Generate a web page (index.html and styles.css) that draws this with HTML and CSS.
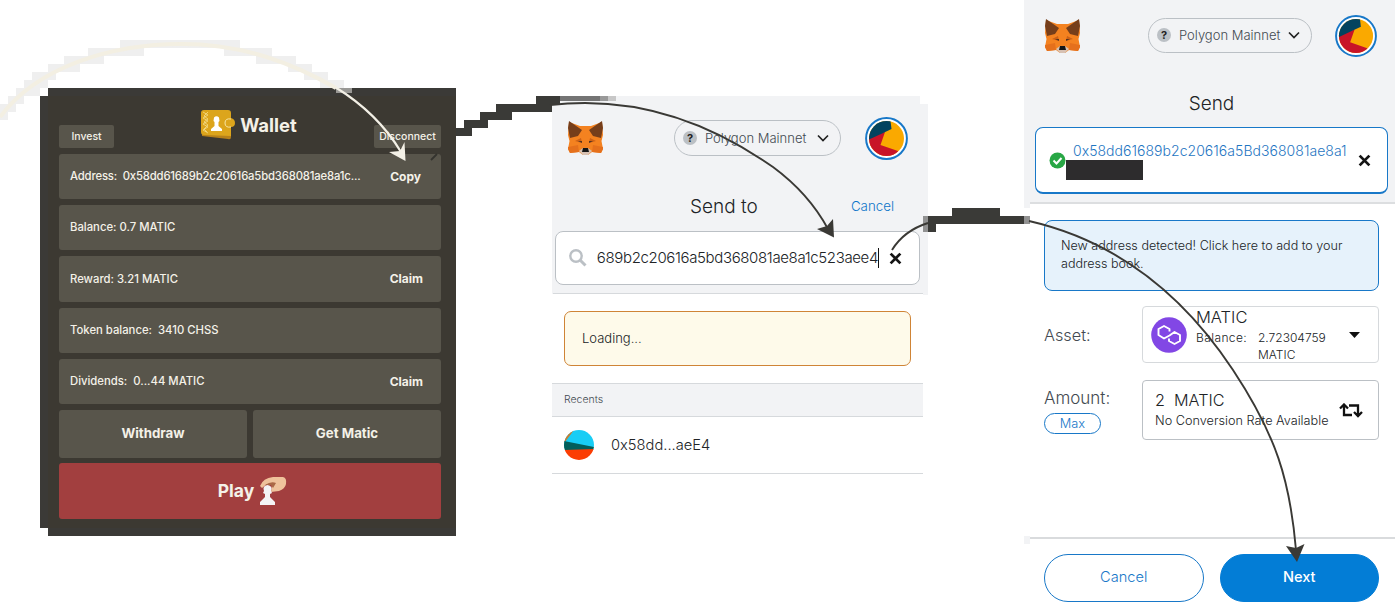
FILE: index.html
```
<!DOCTYPE html>
<html lang="en">
<head>
<meta charset="utf-8">
<title>Wallet transfer guide</title>
<link rel="stylesheet" href="styles.css">
</head>
<body>
<svg class="defs" width="0" height="0">
  <symbol id="fox" viewBox="0 0 35 34">
    <path fill="#f48220" d="M1 1 12 5H23L34 1 35 14 33.500 20 35 28 33 32 24 31 20 34H15L11 31 2 32 0 28 1.500 20 0 14Z"/>
    <path fill="#e5701c" d="M0 26 10 24 11 31 2 32 0 28ZM35 26 25 24 24 31 33 32 35 28Z"/>
    <path fill="#763e1a" d="M1 0 14 9 10 15 2 17 1 12 0 7ZM34 0 21 9 25 15 33 17 34 12 35 7Z"/>
    <path fill="#cd6116" d="M7 20 13 17 14 22ZM28 20 22 17 21 22Z"/>
    <path fill="#573420" d="M10 20 14 20 14 22ZM25 20 21 20 21 22Z"/>
    <path fill="#d7c1b3" d="M11 30 15 27H20L24 30 20 34H15Z"/>
    <path fill="#161616" d="M15 27H20L21 31H14Z"/>
  </symbol>
  <symbol id="avatar" viewBox="0 0 43 43">
    <clipPath id="disc"><circle cx="21.500" cy="21.500" r="17.500"/></clipPath>
    <circle cx="21.500" cy="21.500" r="20.400" fill="#fff" stroke="#1878c8" stroke-width="2"/>
    <g clip-path="url(#disc)"><path fill="#faa900" d="M0 0H43V43H0Z"/><path fill="#c81428" d="M0 20 20 15 15.500 28 33 34V43H0Z"/><path fill="#03435f" d="M0 0H25L26.500 12 16 17 3 23H0Z"/></g>
  </symbol>
  <symbol id="cross" viewBox="0 0 12 12"><path d="M1.500 1.500 10.500 10.500M10.500 1.500 1.500 10.500" stroke="#151515" stroke-width="2.600"/></symbol>
</svg>
<main class="stage">
  <section class="wallet">
    <header class="wallet-head">
      <span class="tag">Invest</span>
      <h1 class="brand">
        <svg width="36" height="32" viewBox="0 0 36 32"><path fill="#b7811a" d="M2 24H31V28Q31 31 28 30L2 27Z"/><path fill="#dca51c" d="M4 1H28Q31 1 31 4V9Q35 10 35 14 35 18 31 18V27L4 26Q1 26 1 23V4Q1 1 4 1Z"/><path d="M3 3 8 6 3 9 8 12 3 15 8 18 3 21 8 24M8 3 4 7 8 10 4 13 8 16 4 20 7 23" fill="none" stroke="#f4dd8b" stroke-width="0.800"/><path d="M31 10Q25 9 25 14T31 18" fill="none" stroke="#f6e5a3"/><path fill="#fff" d="M11 22V20L14.500 17V13L13.500 12 14 8.500Q16.500 6 19 8.500L19.500 12 18.500 13V17L22 20V22Z"/></svg>
        <span>Wallet</span>
      </h1>
      <span class="tag tag-wide">Disconnect</span>
    </header>
    <div class="rows">
      <div class="row"><span class="addr">Address:&nbsp; 0x58dd61689b2c20616a5bd368081ae8a1c...</span><b class="copy">Copy</b></div>
      <div class="row"><span>Balance: 0.7 MATIC</span></div>
      <div class="row"><span>Reward: 3.21 MATIC</span><b>Claim</b></div>
      <div class="row"><span>Token balance:&nbsp; 3410 CHSS</span></div>
      <div class="row"><span>Dividends:&nbsp; 0...44 MATIC</span><b>Claim</b></div>
    </div>
    <div class="pair"><b>Withdraw</b><b>Get Matic</b></div>
    <div class="play"><b>Play</b>
      <svg width="28" height="30" viewBox="0 0 28 30"><path fill="#efc29b" d="M1 10Q4 2 14 1L24 1Q28 2 27 8 26 13 20 15L12 16 13 9 8 8 3 12Z"/><path fill="#aa6845" d="M6 9Q12 5 17 7L14 12 12 9Z"/><path fill="#f4f4f5" d="M1 29V26L6 21V18L4 17 5 15Q3 10 8.500 9 14 10 12 15L13 17 11 18V21L16 26V29Z"/></svg>
    </div>
  </section>

  <section class="phone lookup">
    <div class="lookup-head">
      <div class="topbar">
        <svg class="fox" width="35" height="34"><use href="#fox"/></svg>
        <div class="network"><i>?</i><span>Polygon Mainnet</span><svg width="12" height="8" viewBox="0 0 12 8"><path d="M1 1.500 6 6.500 11 1.500" fill="none" stroke="#222" stroke-width="1.700"/></svg></div>
        <svg class="avatar" width="43" height="43"><use href="#avatar"/></svg>
      </div>
      <div class="titlebar"><h2>Send to</h2><a>Cancel</a></div>
      <div class="search">
        <svg width="18" height="18" viewBox="0 0 18 18"><circle cx="7" cy="7" r="5.700" fill="none" stroke="#bbc0c5" stroke-width="2.400"/><path d="M11 11 16.500 16.500" stroke="#bbc0c5" stroke-width="3"/></svg>
        <div class="query"><span>689b2c20616a5bd368081ae8a1c523aee4</span></div>
        <svg class="close" width="13" height="13"><use href="#cross"/></svg>
      </div>
    </div>
    <div class="loading">Loading...</div>
    <div class="recents">Recents</div>
    <div class="recent">
      <svg width="30" height="30" viewBox="0 0 30 30"><clipPath id="dot"><circle cx="15" cy="15" r="15"/></clipPath><g clip-path="url(#dot)"><path fill="#18cdf5" d="M0 0H30V18H0Z"/><path fill="#c77c31" d="M0 0H10L1 12H0Z"/><path fill="#025e5a" d="M0 11 30 17V20H0Z"/><path fill="#fb3d03" d="M0 20 30 19V30H0Z"/></g></svg>
      <span>0x58dd...aeE4</span>
    </div>
  </section>

  <section class="phone send">
    <div class="send-head">
      <div class="topbar">
        <svg class="fox" width="35" height="34"><use href="#fox"/></svg>
        <div class="network"><i>?</i><span>Polygon Mainnet</span><svg width="12" height="8" viewBox="0 0 12 8"><path d="M1 1.500 6 6.500 11 1.500" fill="none" stroke="#222" stroke-width="1.700"/></svg></div>
        <svg class="avatar" width="42" height="42"><use href="#avatar"/></svg>
      </div>
      <h2>Send</h2>
      <div class="recipient">
        <svg width="17" height="17" viewBox="0 0 17 17"><circle cx="8.500" cy="8.500" r="8" fill="#28a745"/><path d="M4.500 8.500 7.500 11.500 12.500 6" fill="none" stroke="#fff" stroke-width="2"/></svg>
        <div class="to"><span>0x58dd61689b2c20616a5Bd368081ae8a1</span><div class="mask"></div></div>
        <svg class="close" width="13" height="13"><use href="#cross"/></svg>
      </div>
    </div>
    <div class="notice"><span>New address detected! Click here to add to your</span><br><span>address book.</span></div>
    <div class="field asset">
      <label>Asset:</label>
      <div class="box">
        <svg class="coin" width="36" height="36" viewBox="0 0 36 36"><circle cx="18" cy="18" r="17.800" fill="#8247e5"/><path d="M18.500 14.500V12L13 9 7.500 12V18L13 21.500 18.500 18.500 23.500 15 29 18V24L23.500 27 18 24V21.500" fill="none" stroke="#fff" stroke-width="1.900" stroke-linejoin="round"/></svg>
        <div class="holding"><div class="coin-name">MATIC</div><div class="bal"><span>Balance:</span><span class="sum">2.72304759<br>MATIC</span></div></div>
        <svg class="caret" width="11" height="6" viewBox="0 0 11 6"><path d="M0 0H11L5.500 6Z" fill="#111"/></svg>
      </div>
    </div>
    <div class="field amount">
      <div class="amount-label"><label>Amount:</label><span class="max">Max</span></div>
      <div class="box"><div><div class="value">2&nbsp; MATIC</div><div class="rate">No Conversion Rate Available</div></div>
        <svg width="24" height="15" viewBox="0 0 24 15"><path d="M5 1V12H13M1 5.500 5 1.500 9 5.500M10 2.500H19V13M15 9 19 13 23 9" fill="none" stroke="#111" stroke-width="2.300"/></svg>
      </div>
    </div>
    <footer><span class="btn">Cancel</span><span class="btn primary">Next</span></footer>
  </section>

  <svg class="arrows" width="1395" height="616" viewBox="0 0 1395 616">
    <path fill="#efefef" d="M120 40h120v8H120zM88 48h56v8H88zM64 56h40v8H64zM48 64h32v8H48zM32 72h24v8H32zM24 80h24v8H24zM16 88h24v8H16zM8 96h16v8H8zM0 104h16v8H0zM0 112h8v8H0zM224 48h48v8H224zM256 56h40v8H256zM288 64h24v8H288zM304 72h24v8H304zM320 80h24v8H320z"/>
    <path fill="#999895" d="M336 88h16v5H336z"/>
    <path fill="none" stroke="#f3efe2" stroke-width="4" d="M0 117C38 66 112 44 182 44C244 44 294 64 336 88"/>
    <path fill="none" stroke="#f3f0e6" stroke-width="2.200" d="M335 87C366 106 386 127 401 152"/>
    <path fill="#f3f0e6" d="M405.500 161 389 152 400 151 404.500 142Z"/>
    <path stroke="#34332e" stroke-width="1.800" d="M431 160 437 154"/>
    <path fill="#3a3a37" d="M456 128h16v8H456zM464 120h24v8H464zM480 112h32v8H480zM496 104h56v8H496zM536 96h24v8H536z"/>
    <path fill="#747474" d="M560 96h40v5H560z"/><path fill="#999" d="M600 96h8v5H600z"/><path fill="#c7c7c7" d="M608 96h8v5H608z"/>
    <path fill="none" stroke="#3a3935" stroke-width="1.900" d="M550 105C635 95 709 122 773 167C796 184 814 203 828 229"/>
    <path fill="#3a3935" d="M834 237.500 817 229 827 226 833 219Z"/>
    <path fill="#3a3a37" d="M928 216h96v8H928zM952 208h48v8H952zM928 216h8v16H928z"/>
    <path fill="#929292" d="M923 216h5v16H923zM1024 216h6v8H1024z"/>
    <path fill="none" stroke="#3a3935" stroke-width="1.900" d="M892 250C900 237 912 228 928 223M1029 221C1125 243 1190 305 1233 370S1290 480 1296 550"/>
    <path fill="#3a3935" d="M1297 562 1286 546 1296 548 1304.500 544Z"/>
  </svg>
</main>
</body>
</html>
```
FILE: styles.css
```
* { box-sizing: border-box; }
body { margin: 0; background: #fff; overflow: hidden; }
h1, h2 { margin: 0; font-weight: 400; }
svg { display: block; flex: none; }
.defs { position: absolute; }
span, b, h2, label { white-space: nowrap; }
.stage { position: relative; display: flex; align-items: flex-start; gap: 96px; width: 1395px; height: 616px; padding-left: 40px; }
.arrows { position: absolute; top: 0; left: 0; }

.wallet { width: 416px; height: 448px; margin-top: 88px; padding: 13px 15px 0 19px; background: #3c3932; box-shadow: inset 8px 0 #3b3a37, inset 0 8px #3b3a37, inset 0 -8px #3b3a37; clip-path: polygon(8px 0, 100% 0, 100% 100%, 8px 100%, 8px 440px, 0 440px, 0 8px, 8px 8px); color: #f4f1e8; font-family: Inter, sans-serif; font-size: 11.3px; font-weight: 500; flex: none; }
.wallet-head { display: flex; justify-content: space-between; align-items: flex-end; height: 47px; }
.tag { width: 55px; height: 23px; line-height: 23px; background: #58554b; text-align: center; border-radius: 2px; font-size: 10.5px; }
.tag-wide { width: 67px; }
.brand { display: flex; align-items: center; gap: 4px; padding: 0 0 0 9px; height: 47px; font-size: 18.500px; font-weight: 700; }
.rows { display: grid; grid-template-rows: 45px 45px 46px 45px 45px; gap: 6px; margin-top: 6px; }
.row { display: flex; justify-content: space-between; align-items: center; padding: 0 18px 1px 11px; background: #58554b; border-radius: 3px; }
.addr { letter-spacing: -0.16px; }
.row b { font-size: 12px; }
.row .copy { margin-right: 2px; }
.pair { display: grid; grid-template-columns: 188px 188px; gap: 6px; margin-top: 6px; height: 48px; }
.pair b { display: flex; align-items: center; justify-content: center; background: #58554b; border-radius: 3px; font-size: 13.3px; padding-bottom: 2px; }
.play { display: flex; align-items: center; justify-content: center; gap: 5px; height: 56px; margin-top: 5px; padding-left: 5px; background: #a23f3f; border-radius: 3px; font-size: 17.500px; }
.play b { padding-bottom: 2px; }

.phone { color: #202326; font-family: Inter, sans-serif; font-weight: 300; flex: none; }
.topbar { display: flex; align-items: center; }
.network { display: flex; align-items: center; border: 1px solid #bbc0c5; border-radius: 18px; height: 36px; padding: 0 11px 1px 8px; font-size: 13px; color: #434a51; }
.network i { width: 14px; height: 14px; border-radius: 50%; background: #bbc0c5; color: #222; text-align: center; font: bold 11px/14px Inter, sans-serif; margin-right: 8px; }
.network svg { margin-left: auto; }
h2 { font-size: 19px; font-weight: 300; line-height: 24px; }

.lookup { width: 376px; margin-top: 96px; }
.lookup-head { height: 199px; padding: 21px 8px 0 3px; background: linear-gradient(#d6d9dc, #d6d9dc) 1px 197px / 370px 1px no-repeat, #f2f3f5; clip-path: polygon(0 0, 368px 0, 368px 8px, 376px 8px, 376px 199px, 371px 199px, 371px 198px, 0 198px); }
.lookup .topbar { height: 43px; padding-left: 13px; }
.lookup .fox, .lookup .network { margin-top: -1px; }
.lookup .network { width: 167px; margin-left: 71px; margin-right: 24px; }
.titlebar { display: flex; align-items: center; margin-top: 35px; height: 24px; padding-left: 135px; }
.titlebar a { margin-left: auto; margin-right: 26px; margin-top: -2px; color: #0d75c9; font-size: 13.3px; }
.search { display: flex; align-items: center; margin-top: 12px; width: 365px; height: 54px; background: #fff; border: 1px solid #bbc0c5; border-radius: 8px; padding-left: 13px; }
.query { width: 283px; height: 20px; line-height: 19px; margin-left: 9px; font-size: 15px; letter-spacing: -0.36px; border-right: 1px solid #111; display: flex; justify-content: flex-end; }
.search .close { margin-left: 10px; }
.loading { width: 347px; height: 55px; margin: 16px 0 17px 12px; border: 1px solid #cf8436; background: #fefaea; border-radius: 7px; padding-left: 17px; line-height: 52px; font-size: 13px; }
.recents { width: 371px; height: 34px; border: solid #d6d9dc; border-width: 1px 0; background: #f2f3f5; padding-left: 12px; line-height: 31px; font-size: 10.500px; color: #434a51; }
.recent { display: flex; align-items: center; gap: 17px; width: 371px; height: 57px; padding: 0 0 1px 12px; border-bottom: 1px solid #d6d9dc; font-size: 14.700px; }

.send { width: 371px; height: 616px; }
.send-head { height: 208px; background: linear-gradient(#dcdee0, #dcdee0) 6px 202px / 365px 2px no-repeat, #f2f3f5; clip-path: polygon(0 0, 100% 0, 100% 204px, 6px 204px, 6px 208px, 0 208px); padding: 15px 7px 0 11px; }
.send .topbar { height: 42px; padding-left: 10px; }
.send .fox, .send .network { margin-top: -1px; }
.send .network { width: 164px; height: 35px; margin-left: 68px; margin-right: 23px; }
.send h2 { margin-top: 35px; text-align: center; }
.recipient { display: flex; align-items: center; height: 67px; width: 353px; margin-top: 11px; background: #fff; border: 1px solid #1878c8; border-bottom-width: 2px; border-radius: 8px; padding: 1px 0 0 13px; }
.to { width: 282px; height: 39px; color: #1f76c2; font-size: 14px; letter-spacing: 0.04px; line-height: 19px; }
.to span { display: block; padding-left: 7px; }
.mask { width: 77px; height: 20px; background: #2d2c2d; }
.recipient .close { margin-left: 10px; }
.notice { width: 335px; height: 71px; margin: 12px 0 0 20px; background: #e6f2fb; border: 1px solid #1878c8; border-radius: 8px; padding: 16px 16px; font-size: 12.550px; line-height: 17.500px; }
.field { display: flex; margin-left: 20px; }
.field label { color: #434a51; font-size: 16.300px; }
.box { display: flex; width: 237px; border: 1px solid #d6d9dc; border-radius: 4px; margin-left: auto; margin-right: 16px; }
.asset { margin-top: 15px; align-items: center; }
.asset .box { height: 57px; padding-left: 8px; align-items: center; }
.holding { margin-left: 9px; height: 55px; width: 140px; }
.coin-name { font-size: 16.500px; line-height: 20px; }
.bal { display: flex; font-size: 12px; line-height: 17px; margin-top: 2px; }
.bal > span:first-child { width: 62px; letter-spacing: 0.4px; }
.caret { margin-left: 13px; }
.amount { margin-top: 17px; }
.amount-label { display: grid; justify-items: start; align-content: start; padding-top: 8px; }
.amount-label label { line-height: 20px; font-size: 17px; }
.max { width: 57px; height: 21px; margin-top: 5px; line-height: 19px; text-align: center; color: #1878c8; border: 1px solid #1878c8; border-radius: 11px; font-size: 12.800px; }
.amount .box { height: 60px; border-color: #bbc0c5; align-items: center; padding: 0 15px 0 12px; justify-content: space-between; }
.value { font-size: 16.200px; line-height: 22px; }
.rate { font-size: 12.700px; line-height: 20px; }
footer { display: flex; gap: 16px; height: 80px; margin-top: 96px; padding: 18px 16px 0 20px; background: linear-gradient(#d9dbdd, #d9dbdd) 6px 1px / 365px 2px no-repeat, linear-gradient(#f2f3f5, #f2f3f5) 0 0 / 6px 8px no-repeat; }
.btn { width: 160px; height: 48px; line-height: 45px; text-align: center; border: 1px solid #1878c8; border-radius: 24px; color: #1878c8; font-size: 14.600px; }
.primary { background: #037dd6; border-color: #037dd6; color: #fff; font-weight: 500; }
```
